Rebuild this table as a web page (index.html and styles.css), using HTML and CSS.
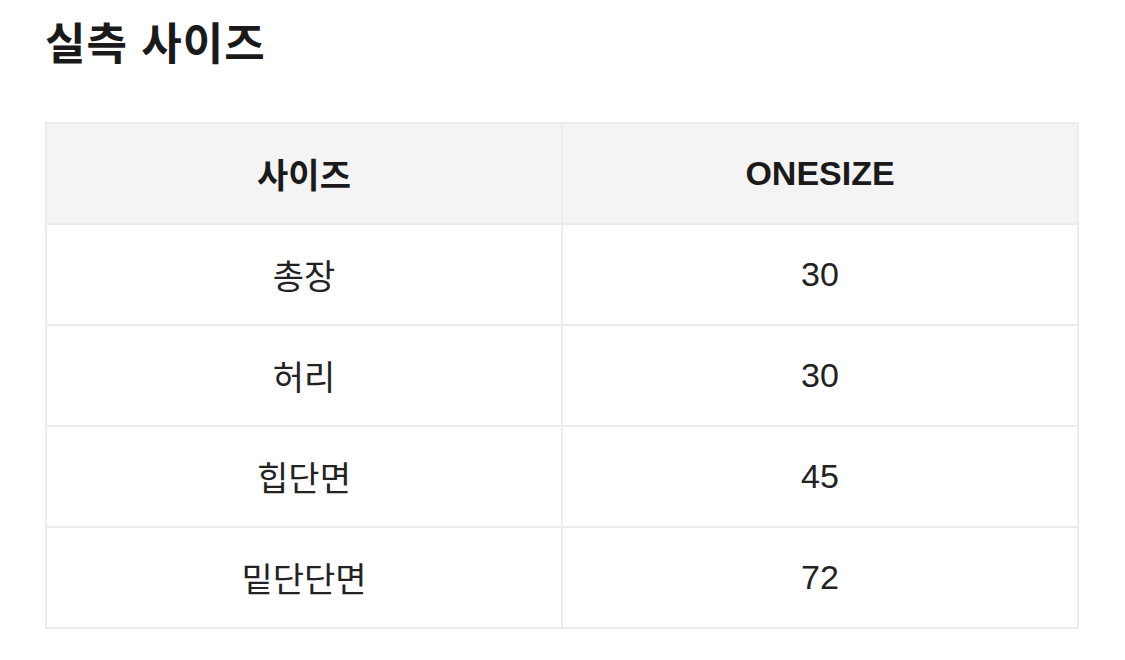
FILE: index.html
```html
<!DOCTYPE html>
<html lang="ko">
<head>
<meta charset="utf-8">
<link rel="stylesheet" href="styles.css">
</head>
<body>
<section class="size-section">
  <h2 class="size-title">실측 사이즈</h2>
  <table class="size-table">
    <thead>
      <tr><th>사이즈</th><th>ONESIZE</th></tr>
    </thead>
    <tbody>
      <tr><td>총장</td><td>30</td></tr>
      <tr><td>허리</td><td>30</td></tr>
      <tr><td>힙단면</td><td>45</td></tr>
      <tr><td>밑단단면</td><td>72</td></tr>
    </tbody>
  </table>
</section>
</body>
</html>
```

FILE: styles.css
```css
html, body {
  margin: 0;
  padding: 0;
  background: #ffffff;
}
body {
  font-family: "Liberation Sans", "Noto Sans CJK KR", sans-serif;
  color: #1e1e1e;
}
.size-section {
  padding: 13px 46px 0 45px;
}
.size-title {
  margin: 0;
  font-size: 44px;
  font-weight: 700;
  line-height: 64px;
  color: #1a1a1a;
  letter-spacing: 1px;
}
.size-table {
  margin-top: 45px;
  width: 1034px;
  border-collapse: collapse;
  table-layout: fixed;
}
.size-table th,
.size-table td {
  width: 50%;
  height: 99px;
  padding: 0;
  border: 2px solid #ececec;
  text-align: center;
  vertical-align: middle;
  font-size: 34px;
}
.size-table th {
  background: #f4f4f4;
  font-weight: 700;
  color: #1a1a1a;
}
.size-table td {
  font-weight: 400;
  color: #222222;
}
```
